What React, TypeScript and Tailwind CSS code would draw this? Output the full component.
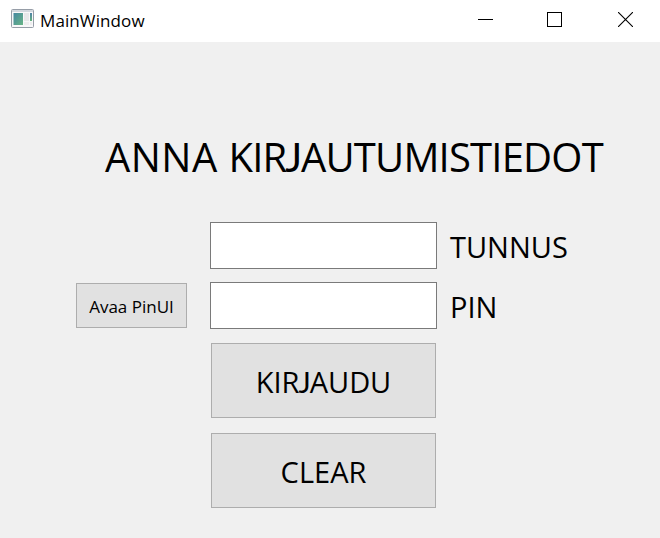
function AppIcon() {
  return (
    <svg width="24" height="20" viewBox="0 0 24 20" className="ml-[11px] shrink-0">
      <defs>
        <linearGradient id="pane" x1="0" y1="0" x2="1" y2="1">
          <stop offset="0" stopColor="#4487a0" />
          <stop offset="1" stopColor="#69b586" />
        </linearGradient>
        <linearGradient id="side" x1="0" y1="0" x2="0" y2="1">
          <stop offset="0" stopColor="#4f82a8" />
          <stop offset="1" stopColor="#64b27c" />
        </linearGradient>
      </defs>
      <rect x="0.5" y="0.5" width="22" height="18" rx="1" fill="#f8f8f9" stroke="#969da7" />
      <rect x="1" y="1" width="21" height="2" fill="#d3d8de" />
      <rect x="2.5" y="4" width="9.5" height="12" fill="url(#pane)" />
      <rect x="13" y="4" width="5" height="8" fill="#e7e8e9" />
      <rect x="13" y="13" width="5" height="3" fill="#ededee" />
      <rect x="19" y="4" width="2" height="8" fill="url(#side)" />
      <rect x="19" y="13" width="2" height="3" fill="#ededee" />
    </svg>
  );
}

function TitleBar() {
  return (
    <header className="flex h-[42px] items-start bg-white pt-[9px]">
      <AppIcon />
      <span className="ml-[5px] text-[17px] leading-6 tracking-[0.1px]">MainWindow</span>
      <div className="mr-[27px] ml-auto mt-[3px] flex" role="group">
        <svg width="15" height="15" shapeRendering="crispEdges" stroke="black" fill="none" className="mr-[54px]">
          <path d="M0 7.5H15" />
        </svg>
        <svg width="15" height="15" shapeRendering="crispEdges" stroke="black" fill="none" className="mr-[56px]">
          <rect x="0.5" y="0.5" width="14" height="14" />
        </svg>
        <svg width="15" height="15" stroke="black" fill="none">
          <path d="M0 0L15 15M15 0L0 15" strokeWidth="1.1" />
        </svg>
      </div>
    </header>
  );
}

// Lato's J rests on the baseline, unlike the descending J of Open Sans.
function J() {
  return <span className="-ml-[0.03em] font-['Lato',sans-serif] tracking-[-0.03em]">J</span>;
}

const button = "flex items-center justify-center border border-[#adadad] bg-[#e1e1e1]";
const field = "block h-[47px] w-[227px] border border-[#7a7a7a] bg-white px-2 text-[30px] outline-none";

export default function App() {
  return (
    <div className="h-[538px] w-[660px] overflow-hidden bg-[#f0f0f0] font-['Open_Sans','Noto_Sans',sans-serif] text-black">
      <TitleBar />
      <main>
        <h1 className="ml-[105px] h-[144px] pt-[87px] text-[40px] leading-[56px] tracking-[-0.8px] whitespace-nowrap">
          <span className="tracking-[0.45px]">ANNA </span>
          <span>KIR<J />AUTUMISTIEDOT</span>
        </h1>
        <div className="mt-9 ml-[210px] flex items-center">
          <input className={field} aria-label="TUNNUS" />
          <label className="ml-[13px] pt-[2px] text-[29px] leading-10"><span>TUNNUS</span></label>
        </div>
        <div className="mt-[13px] ml-[76px] flex items-center">
          <button className={`${button} mr-[23px] h-[45px] w-[111px] pt-[3px] text-[17px]`}>
            <span>Avaa PinUI</span>
          </button>
          <input className={field} aria-label="PIN" />
          <label className="ml-[13px] pt-[2px] text-[29px] leading-10"><span>PIN</span></label>
        </div>
        <div className="mt-[14px] ml-[211px] flex w-[225px] flex-col gap-[15px] text-[29px]">
          <button className={`${button} h-[75px] pt-[3px]`}><span className="tracking-[-0.1px]">KIR<J />AUDU</span></button>
          <button className={`${button} h-[75px] pt-[3px]`}><span>CLEAR</span></button>
        </div>
      </main>
    </div>
  );
}
